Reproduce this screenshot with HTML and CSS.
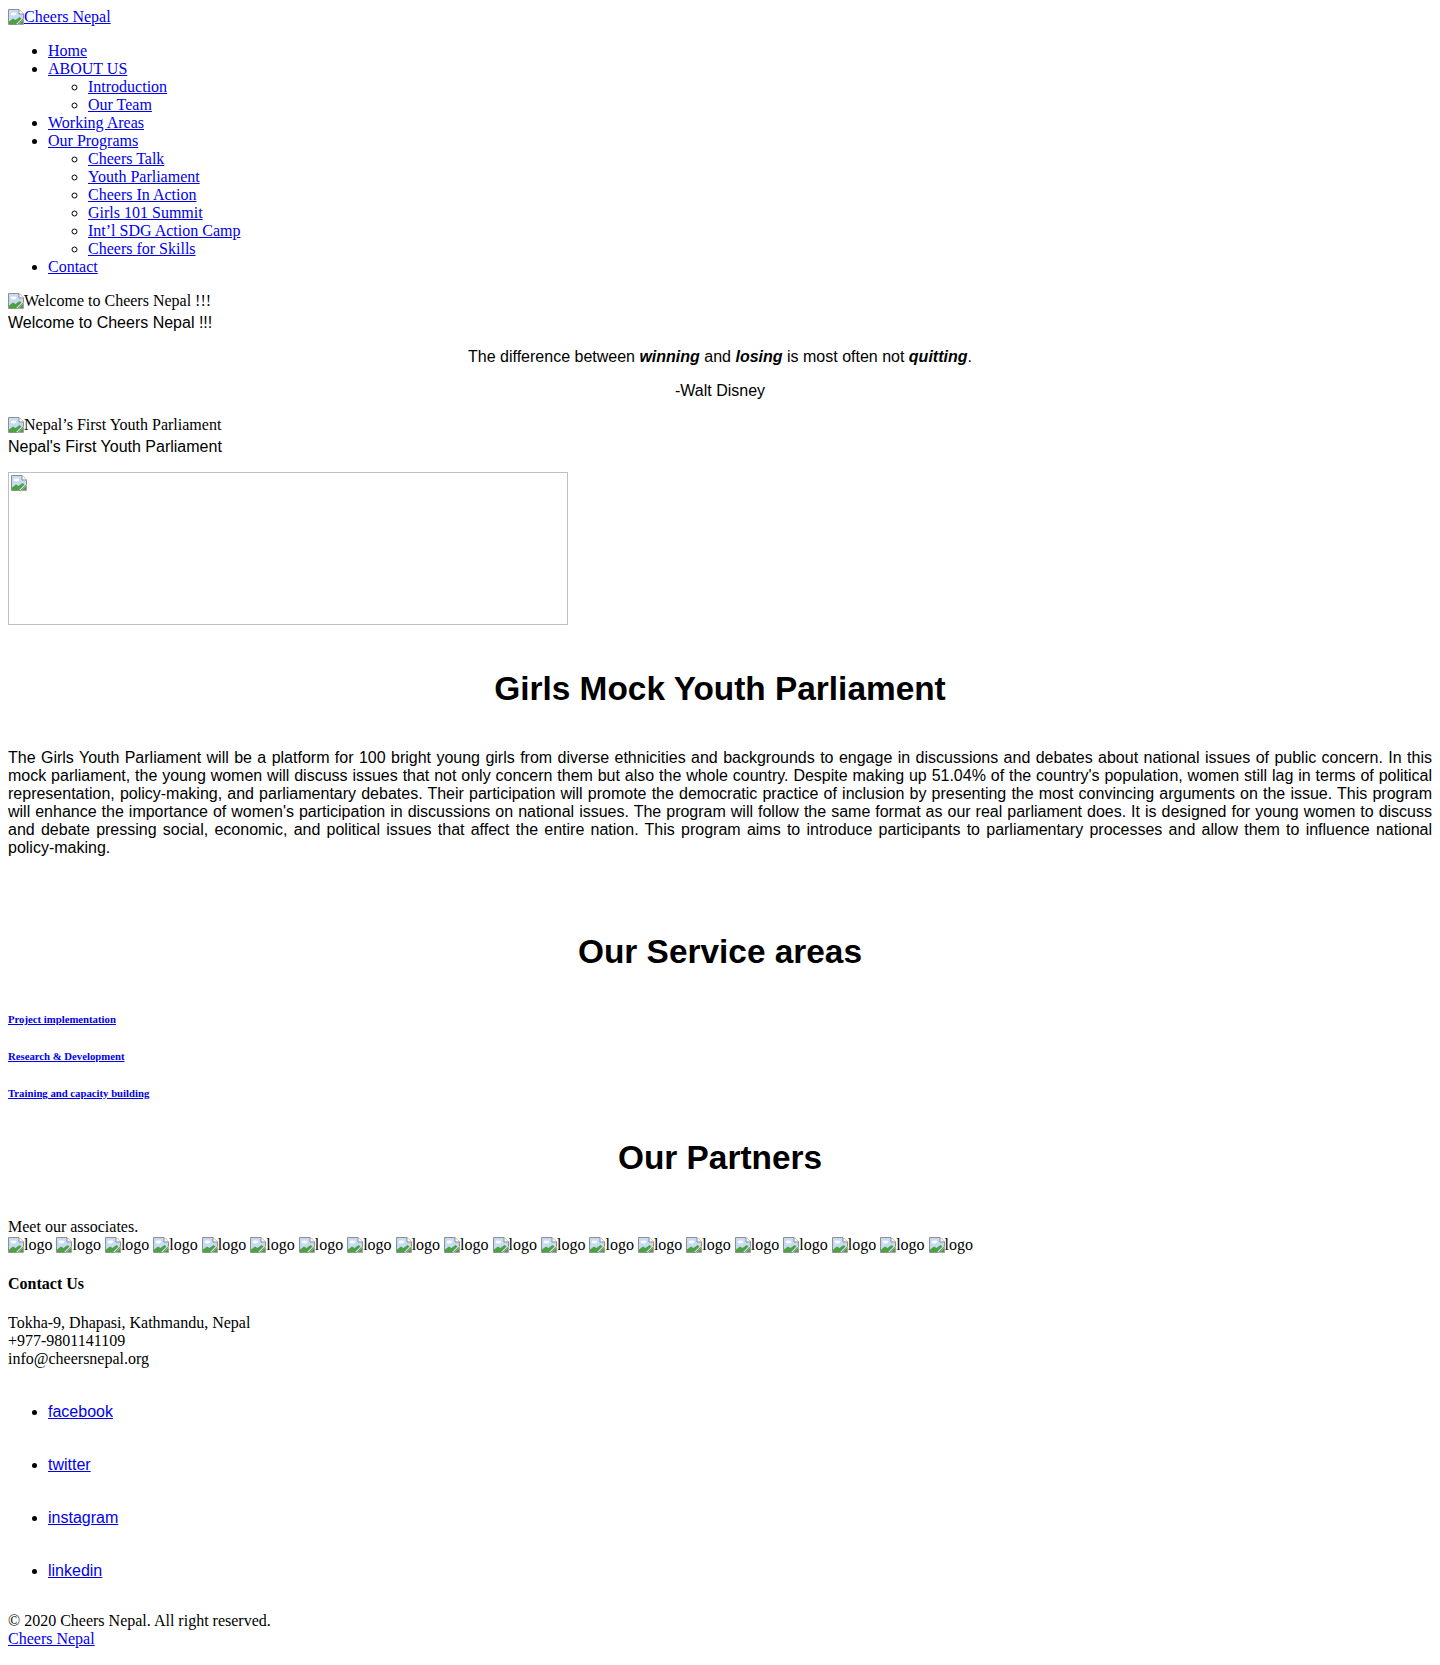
FILE: index.html
```html
<!DOCTYPE html>
<html lang="en">
<head>
<meta charset="utf-8">
<title>Cheers Nepal</title>
<link rel="stylesheet" href="styles.css">
</head>
<body>
<header class="site-header">
  <div class="brand-row"><a class="brand" href="#"><span class="broken"><svg class="bi" viewBox="0 0 16 16" width="16" height="16"><path d="M0.5 0.5H11L15.5 5V9.5L9.5 15.5H0.5Z" fill="#c8dbf5" stroke="#8e8e8e"/><path d="M11 0.5V5H15.5" fill="#fff" stroke="#8e8e8e"/><ellipse cx="5.5" cy="5" rx="3" ry="1.4" fill="#fff"/><path d="M1 15V12.5L5 9.5L7.5 11L11.5 8L13.5 9.5L8 15Z" fill="#4aa33c"/><path d="M10.5 15.5L15.5 10.5V15.5Z" fill="#4aa33c" stroke="#8e8e8e" stroke-width="0.6"/></svg>Cheers Nepal</span></a></div>
  <nav>
    <ul class="nav">
      <li><a href="#">Home</a></li>
      <li><a href="#">ABOUT US</a>
        <ul>
          <li><a href="#">Introduction</a></li>
          <li><a href="#">Our Team</a></li>
        </ul>
      </li>
      <li><a href="#">Working Areas</a></li>
      <li><a href="#">Our Programs</a>
        <ul>
          <li><a href="#">Cheers Talk</a></li>
          <li><a href="#">Youth Parliament</a></li>
          <li><a href="#">Cheers In Action</a></li>
          <li><a href="#">Girls 101 Summit</a></li>
          <li><a href="#">Int’l SDG Action Camp</a></li>
          <li><a href="#">Cheers for Skills</a></li>
        </ul>
      </li>
      <li><a href="#">Contact</a></li>
    </ul>
  </nav>
</header>

<section class="slide">
  <div class="slide-img"><span class="broken"><svg class="bi" viewBox="0 0 16 16" width="16" height="16"><path d="M0.5 0.5H11L15.5 5V9.5L9.5 15.5H0.5Z" fill="#c8dbf5" stroke="#8e8e8e"/><path d="M11 0.5V5H15.5" fill="#fff" stroke="#8e8e8e"/><ellipse cx="5.5" cy="5" rx="3" ry="1.4" fill="#fff"/><path d="M1 15V12.5L5 9.5L7.5 11L11.5 8L13.5 9.5L8 15Z" fill="#4aa33c"/><path d="M10.5 15.5L15.5 10.5V15.5Z" fill="#4aa33c" stroke="#8e8e8e" stroke-width="0.6"/></svg>Welcome to Cheers Nepal !!!</span></div>
  <div class="caption">Welcome to Cheers Nepal !!!</div>
</section>

<section class="quote">
  <p>The difference between <strong><em>winning</em></strong> and <strong><em>losing</em></strong> is most often not <strong><em>quitting</em></strong>.</p>
  <p>-Walt Disney</p>
</section>

<section class="slide">
  <div class="slide-img"><span class="broken"><svg class="bi" viewBox="0 0 16 16" width="16" height="16"><path d="M0.5 0.5H11L15.5 5V9.5L9.5 15.5H0.5Z" fill="#c8dbf5" stroke="#8e8e8e"/><path d="M11 0.5V5H15.5" fill="#fff" stroke="#8e8e8e"/><ellipse cx="5.5" cy="5" rx="3" ry="1.4" fill="#fff"/><path d="M1 15V12.5L5 9.5L7.5 11L11.5 8L13.5 9.5L8 15Z" fill="#4aa33c"/><path d="M10.5 15.5L15.5 10.5V15.5Z" fill="#4aa33c" stroke="#8e8e8e" stroke-width="0.6"/></svg>Nepal’s First Youth Parliament</span></div>
  <div class="caption">Nepal's First Youth Parliament</div>
</section>

<div class="media">
  <div class="media-box"><svg class="bi" viewBox="0 0 16 16" width="16" height="16"><path d="M0.5 0.5H11L15.5 5V9.5L9.5 15.5H0.5Z" fill="#c8dbf5" stroke="#8e8e8e"/><path d="M11 0.5V5H15.5" fill="#fff" stroke="#8e8e8e"/><ellipse cx="5.5" cy="5" rx="3" ry="1.4" fill="#fff"/><path d="M1 15V12.5L5 9.5L7.5 11L11.5 8L13.5 9.5L8 15Z" fill="#4aa33c"/><path d="M10.5 15.5L15.5 10.5V15.5Z" fill="#4aa33c" stroke="#8e8e8e" stroke-width="0.6"/></svg></div>
</div>

<section class="program">
  <h2 class="section-title">Girls Mock Youth Parliament</h2>
  <p class="program-text">The Girls Youth Parliament will be a platform for 100 bright young girls from diverse ethnicities and backgrounds to engage in discussions and debates about national issues of public concern. In this mock parliament, the young women will discuss issues that not only concern them but also the whole country. Despite making up 51.04% of the country's population, women still lag in terms of political representation, policy-making, and parliamentary debates. Their participation will promote the democratic practice of inclusion by presenting the most convincing arguments on the issue. This program will enhance the importance of women's participation in discussions on national issues. The program will follow the same format as our real parliament does. It is designed for young women to discuss and debate pressing social, economic, and political issues that affect the entire nation. This program aims to introduce participants to parliamentary processes and allow them to influence national policy-making.</p>
</section>

<section class="services">
  <h2 class="section-title">Our Service areas</h2>
  <h6 class="service"><a href="#">Project implementation</a></h6>
  <h6 class="service"><a href="#">Research &amp; Development</a></h6>
  <h6 class="service"><a href="#">Training and capacity building</a></h6>
</section>

<section class="partners">
  <h2 class="section-title">Our Partners</h2>
  <div class="partners-intro">Meet our associates.</div>
  <div class="logos" id="logos"></div>
</section>

<footer class="footer">
  <h4 class="contact-title">Contact Us</h4>
  <div class="contact-lines">
    <div>Tokha-9, Dhapasi, Kathmandu, Nepal</div>
    <div>+977-9801141109</div>
    <div>info@cheersnepal.org</div>
  </div>
  <ul class="social">
    <li><a href="#">facebook</a></li>
    <li><a href="#">twitter</a></li>
    <li><a href="#">instagram</a></li>
    <li><a href="#">linkedin</a></li>
  </ul>
  <div class="copy">© 2020 Cheers Nepal. All right reserved.</div>
  <div><a href="#">Cheers Nepal</a></div>
</footer>
<script>
  (function () {
    var icon = document.querySelector('.media-box .bi').outerHTML;
    var box = document.getElementById('logos');
    var html = [];
    for (var i = 0; i < 20; i++) {
      html.push('<span class="broken">' + icon + 'logo</span>');
    }
    box.innerHTML = html.join(' ');
  })();
</script>
</body>
</html>
```

FILE: styles.css
```css
body {
  margin: 8px;
  font-family: "Liberation Serif", "Times New Roman", serif;
  font-size: 16px;
  color: #000;
  background: #fff;
}

a {
  color: #0000ee;
}

.broken {
  display: inline;
}

.bi {
  display: inline-block;
  width: 16px;
  height: 16px;
  vertical-align: top;
  margin-top: 1px;
}

.nav {
  margin: 16px 0;
  padding-left: 40px;
}

.nav ul {
  margin: 0;
  padding-left: 40px;
  list-style-type: circle;
}

.slide-img {
  padding-bottom: 4px;
}

.caption {
  font-family: "Liberation Sans", Arial, sans-serif;
}

.quote {
  font-family: "Liberation Sans", Arial, sans-serif;
  text-align: center;
}

.quote p {
  margin: 16px 0;
}

.media {
  margin: 16px 0 45px;
  line-height: 0;
}

.media-box {
  display: inline-block;
  box-sizing: border-box;
  width: 560px;
  height: 153px;
  border: 1px solid #c0c0c0;
  padding: 2px;
}

.media-box .bi {
  margin: 0;
}

.section-title {
  font-family: "Liberation Sans", Arial, sans-serif;
  font-size: 33.4px;
  font-weight: bold;
  text-align: center;
  margin: 27px 0;
}

.program-text {
  font-family: "Liberation Sans", Arial, sans-serif;
  font-size: 16px;
  line-height: 18px;
  text-align: justify;
  margin: 41px 0 76px;
}

.services .section-title {
  margin-bottom: 42px;
}

.service {
  font-size: 10.72px;
  font-weight: bold;
  margin: 25px 0;
}

.services .service:first-of-type {
  margin-top: 42px;
}

.partners .section-title {
  margin-top: 40px;
  margin-bottom: 41px;
}

.contact-title {
  font-size: 16px;
  margin: 21px 0;
}

.social {
  font-family: "Liberation Sans", Arial, sans-serif;
  margin: 0;
  padding-left: 40px;
}

.social li {
  margin: 35px 0;
}

.social li:last-child {
  margin-bottom: 32px;
}

.copy {
  margin-top: 0;
}
```
